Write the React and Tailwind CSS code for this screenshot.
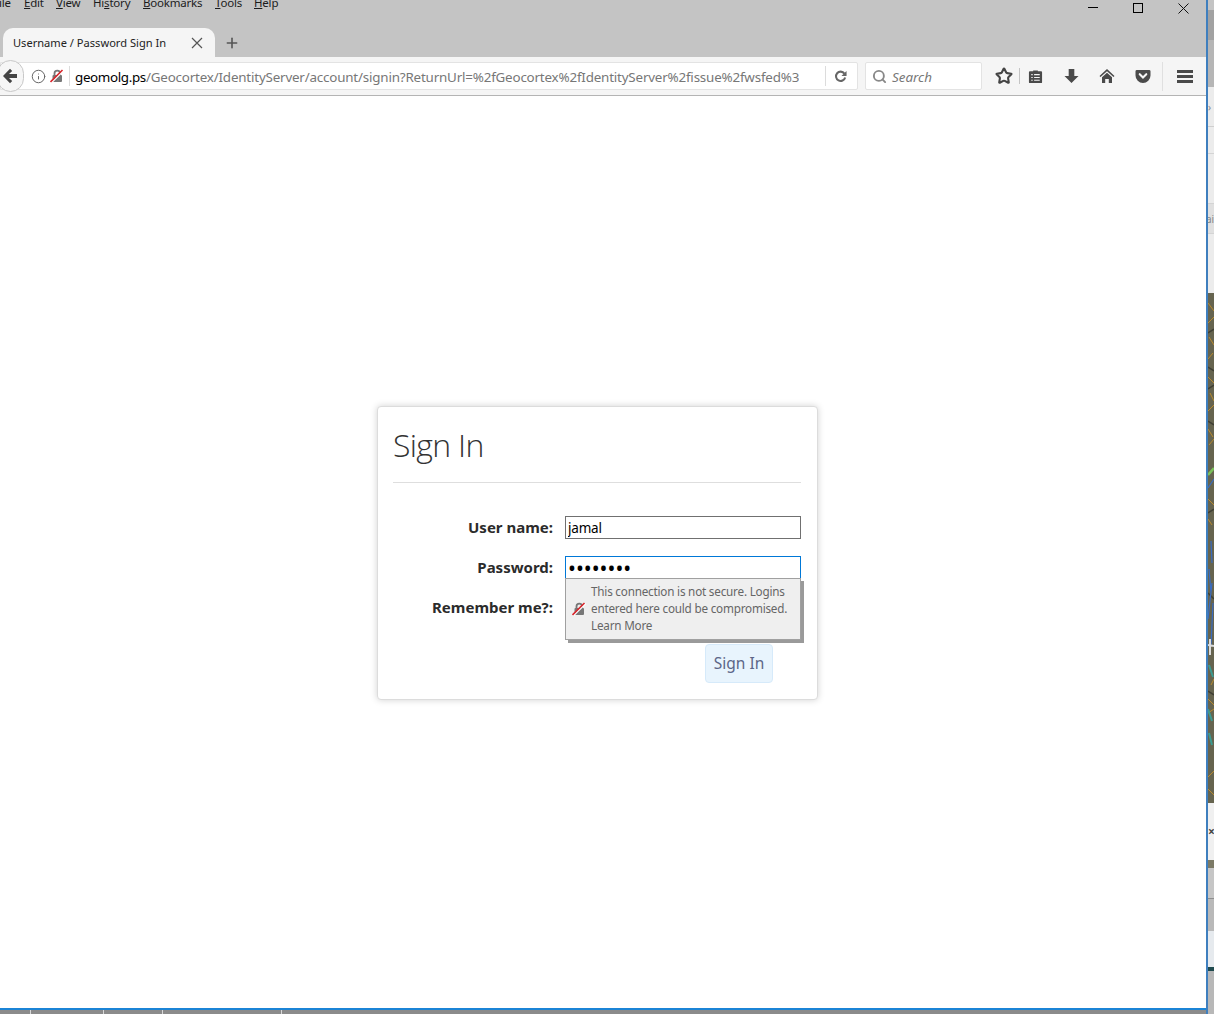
import { Plus, Search, Info, Star } from 'lucide-react';

// gray padlock with the red strike, used in the url bar and in the password popup
function InsecureLock({ className }) {
  return (
    <svg viewBox="0 0 14 14" className={className}>
      <path d="M4.500 6V4.400a2.800 2.800 0 0 1 5.600 0V6" fill="none" stroke="#777" strokeWidth="1.800" />
      <rect x="2.500" y="6" width="9.500" height="7" rx="1" fill="#777" />
      <path d="M1.600 13.600 13.600 1.600" stroke="#fff" strokeWidth="1.400" />
      <path d="M0.500 13 12.500 1" stroke="#d9262c" strokeWidth="1.600" />
    </svg>
  );
}

function BackArrow() {
  return (
    <svg viewBox="0 0 16 16" className="w-[16px] h-[16px] -ml-[2px]">
      <path d="M8 0.800 1 8l7 7.200 2.200-2.200L7 10h8V6H7l3.200-3z" fill="#444" />
    </svg>
  );
}

function ReloadIcon() {
  return (
    <svg viewBox="0 0 14 14" className="w-[13px] h-[13px]">
      <path d="M11.200 3.800A5 5 0 1 0 12 8" fill="none" stroke="#666" strokeWidth="2.200" />
      <path d="M13.500 1v5.500H8z" fill="#666" />
    </svg>
  );
}

function DownloadIcon() {
  return (
    <svg viewBox="0 0 16 16" className="w-[15px] h-[16px]">
      <path d="M5 0.500h6V8h4.500L8 15.500 0.500 8H5z" fill="#4a4a4a" />
    </svg>
  );
}

function ReadingList() {
  return (
    <svg viewBox="0 0 16 16" className="w-[15px] h-[15px]">
      <path d="M5.500 2.500V1.500h5v1H14a1 1 0 0 1 1 1V14a1 1 0 0 1-1 1H2a1 1 0 0 1-1-1V3.500a1 1 0 0 1 1-1z" fill="#4a4a4a" />
      <path d="M3.500 6h1.500M3.500 9h1.500M3.500 12h1.500M6.500 6h6M6.500 9h6M6.500 12h6" stroke="#f5f5f5" strokeWidth="1.200" />
    </svg>
  );
}

function HomeIcon() {
  return (
    <svg viewBox="0 0 16 16" className="w-[16px] h-[16px]">
      <path d="M8 1 0.500 8l1 1.100L8 3.200l6.500 5.900 1-1.100z" fill="#4a4a4a" />
      <path d="M3 9.300 8 4.800l5 4.500V15H9.800v-4H6.200v4H3z" fill="#4a4a4a" />
    </svg>
  );
}

function PocketIcon() {
  return (
    <svg viewBox="0 0 16 16" className="w-[16px] h-[15px]">
      <path d="M1.500 1h13A1.500 1.500 0 0 1 16 2.500V7a8 8 0 0 1-16 0V2.500A1.500 1.500 0 0 1 1.500 1z" fill="#4a4a4a" />
      <path d="M4.500 5.500 8 9l3.500-3.500" fill="none" stroke="#f5f5f5" strokeWidth="2.200" strokeLinecap="round" />
    </svg>
  );
}

function MenuItem({ label, rest, className }) {
  return (
    <span className={className}>
      <span className="underline">{label}</span>{rest}
    </span>
  );
}

function WindowBar() {
  return (
    <div className="h-[28px] flex items-start overflow-hidden text-[11.5px] leading-[14px] tracking-[-0.2px] text-[#1c1c1c]">
      <div className="flex -mt-[4px] -ml-[1px]">
        <span className="w-[25px]">ile</span>
        <MenuItem label="E" rest="dit" className="w-[32px]" />
        <MenuItem label="V" rest="iew" className="w-[37px]" />
        <span className="w-[50px]">Hi<span className="underline">s</span>tory</span>
        <MenuItem label="B" rest="ookmarks" className="w-[72px]" />
        <MenuItem label="T" rest="ools" className="w-[39px]" />
        <MenuItem label="H" rest="elp" />
      </div>
      <div className="ml-auto flex items-start mr-[17px] mt-[3px]">
        <div className="w-[10px] h-px bg-black mt-[4px]" />
        <div className="w-[10px] h-[10px] border border-black ml-[35px]" />
        <svg viewBox="0 0 11 11" className="w-[11px] h-[11px] ml-[35px]">
          <path d="M0.500 0.500 10.500 10.500M10.500 0.500 0.500 10.500" stroke="#111" strokeWidth="1" />
        </svg>
      </div>
    </div>
  );
}

function TabBar() {
  return (
    <div className="h-[29px] flex items-stretch">
      <div className="w-[212px] ml-[3px] bg-[#f5f5f5] rounded-t-[10px] flex items-center pl-[10px] pr-[12px] pt-[1px] text-[11.1px] text-[#222]">
        <span>Username / Password Sign In</span>
        <svg viewBox="0 0 12 12" className="ml-auto w-[12px] h-[12px]">
          <path d="M1 1 11 11M11 1 1 11" stroke="#555" strokeWidth="1.200" />
        </svg>
      </div>
      <div className="flex items-center ml-[9px]">
        <Plus className="w-[16px] h-[16px] text-[#555]" strokeWidth={2.4} />
      </div>
    </div>
  );
}

function Toolbar() {
  return (
    <div className="h-[39px] bg-[#f5f5f5] border-b border-[#b4b4b4] flex items-center">
      <div className="w-[858px] h-[28px] bg-white border border-[#e3e3e3] rounded-r-[2px] flex items-center">
        <div className="w-[27px] h-[32px] -ml-[4px] shrink-0 rounded-full bg-[#f6f6f6] border border-[#c8c8c8] flex items-center justify-center">
          <BackArrow />
        </div>
        <Info className="w-[15px] h-[15px] ml-[7px] text-[#666] shrink-0" strokeWidth={1.6} />
        <InsecureLock className="w-[14px] h-[14px] ml-[4px] shrink-0" />
        <div className="w-px h-[20px] bg-[#dcdcdc] ml-[5px] shrink-0" />
        <div className="ml-[5px] w-[724px] overflow-hidden whitespace-nowrap text-[13.4px] tracking-[-0.19px] text-[#777] shrink-0 pt-[2px]">
          <span className="text-black tracking-[-0.35px]">geomolg.ps</span>/Geocortex/IdentityServer/account/signin?ReturnUrl=%2fGeocortex%2fIdentityServer%2fissue%2fwsfed%3fwa
        </div>
        <div className="w-px h-[20px] bg-[#dcdcdc] ml-[26px] shrink-0" />
        <div className="ml-[8px] shrink-0"><ReloadIcon /></div>
      </div>
      <div className="w-[117px] h-[28px] ml-[7px] bg-white border border-[#e3e3e3] rounded-[2px] flex items-center pl-[6px]">
        <Search className="w-[15px] h-[15px] text-[#888]" strokeWidth={3} />
        <span className="ml-[5px] pt-[2px] italic text-[13.4px] text-[#777]">Search</span>
      </div>
      <Star className="w-[18px] h-[18px] ml-[13px] text-[#444]" strokeWidth={2.8} />
      <div className="w-px h-[16px] bg-[#c4c4c4] ml-[6px]" />
      <div className="ml-[8px]"><ReadingList /></div>
      <div className="ml-[21px]"><DownloadIcon /></div>
      <div className="ml-[20px]"><HomeIcon /></div>
      <div className="ml-[20px]"><PocketIcon /></div>
      <div className="w-px h-[29px] bg-[#e0e0e0] ml-[11px]" />
      <div className="ml-[14px] w-[16px] flex flex-col gap-[2px]">
        <div className="h-[3px] bg-[#4a4a4a]" />
        <div className="h-[3px] bg-[#4a4a4a]" />
        <div className="h-[3px] bg-[#4a4a4a]" />
      </div>
    </div>
  );
}

function SignInCard() {
  return (
    <div className="w-[441px] bg-white border border-[#dcdcdc] rounded-[4px] shadow-[0_0_7px_rgba(0,0,0,0.18)] pl-[15px] pr-[16px] pb-[16px]">
      <div className="h-[76px] border-b border-[#dedede] flex items-end pb-[15px]">
        <h1 className="text-[32px] leading-[44px] font-light text-[#333] font-['Open_Sans',sans-serif] tracking-[-0.7px]">Sign In</h1>
      </div>
      <form className="mt-[33px] relative">
        <div className="flex flex-col gap-[16px]">
          <div className="flex items-start h-[24px] gap-[12px]">
            <label className="w-[160px] text-right text-[15px] leading-[22px] font-bold text-[#2b2b2b]">User name:</label>
            <input type="text" defaultValue="jamal" className="w-[236px] h-[23px] border border-[#707070] px-[2px] text-[13.5px] tracking-[-0.2px] text-black outline-none" />
          </div>
          <div className="flex items-start h-[24px] gap-[12px]">
            <label className="w-[160px] text-right text-[15px] leading-[22px] font-bold text-[#2b2b2b]">Password:</label>
            <input type="password" defaultValue="password" className="w-[236px] h-[24px] border border-[#0078d7] px-[2px] text-[21px] leading-none text-black outline-none" />
          </div>
          <div className="flex items-start h-[24px] gap-[12px]">
            <label className="w-[160px] text-right text-[15px] leading-[22px] font-bold text-[#2b2b2b]">Remember me?:</label>
          </div>
        </div>
        <div className="pl-[312px] mt-[24px]">
          <button type="button" className="w-[68px] h-[39px] pt-[1px] bg-[#e8f4fd] border border-[#d6eafa] rounded-[4px] text-[15.5px] text-[#5c6688]">Sign In</button>
        </div>
        {/* insecure password popup, sits over the remember row */}
        <div className="absolute left-[172px] top-[62px] w-[236px] h-[62px] bg-[#efefef] border border-[#a0a0a0] shadow-[3px_3px_0_#9a9a9a] flex items-center pl-[6px] text-[11.7px] leading-[17px] text-[#666]">
          <InsecureLock className="w-[14px] h-[14px] shrink-0" />
          <div className="ml-[5px] -mt-[1px] tracking-[-0.2px] whitespace-nowrap">
            <div>This connection is not secure. Logins</div>
            <div>entered here could be compromised.</div>
            <div>Learn More</div>
          </div>
        </div>
      </form>
    </div>
  );
}

// the window behind the browser, only a sliver of it shows at the right edge
function BehindStrip() {
  return (
    <div className="w-[6px] flex flex-col overflow-hidden">
      <div className="h-[10px] bg-[#c4c4c4]" />
      <div className="h-[30px] bg-[#a2a2a2]" />
      <div className="h-[47px] bg-[#b6b6b6]" />
      <div className="h-[206px] bg-[#ececec] flex flex-col text-[10px] leading-none text-[#888]">
        <div className="h-[40px] border-b border-[#cfcfcf] flex items-center"><span>›</span></div>
        <div className="h-[27px] border-b border-[#d4d4d4]" />
        <div className="h-[50px] border-b border-[#d4d4d4]" />
        <div className="h-[30px] bg-[#e0e0e0] border-b border-[#d4d4d4] flex items-center"><span className="-ml-[2px]">ai</span></div>
      </div>
      <svg viewBox="0 0 6 510" preserveAspectRatio="none" className="w-[6px] h-[510px] block">
        <rect width="6" height="510" fill="#66644f" />
        <path d="M0 10 6 18M0 30 6 24M1 44 6 52M0 66 5 60M0 84 6 90M2 100 6 108M0 118 6 112M0 136 5 144M1 152 6 146M0 206 6 212M0 226 4 232M3 392 6 386M0 406 6 412M0 420 6 416M0 484 6 478M0 496 6 502" stroke="#b98a2e" strokeWidth="1" />
        <path d="M0 40 6 36M0 74 6 78M0 96 6 92M0 128 6 132M0 220 6 216M0 300 6 306M0 398 6 402" stroke="#3f3f34" strokeWidth="1.500" />
        <path d="M0 182 6 175" stroke="#7ac05a" strokeWidth="2.500" />
        <path d="M0 195 6 186M3 248 4 270M1 276 3 300M0 326 4 290M5 310 3 352" stroke="#3a6cc0" strokeWidth="1.200" />
        <path d="M1 372 5 384M0 416 4 428M1 440 4 452" stroke="#3c9a90" strokeWidth="2" />
        <path d="M0 352 6 353M2 346 2 362" stroke="#dcdcdc" strokeWidth="2" />
      </svg>
      <div className="h-[57px] bg-[#f0f0f0] flex items-center">
        <span className="text-[12px] leading-none font-bold text-[#444]">×</span>
      </div>
      <div className="h-[8px] bg-[#7c7a66]" />
      <div className="h-[31px] bg-[#c6c6c6] border-b border-[#8e8e8e]" />
      <div className="h-[32px] bg-[#b9b9b9]" />
      <div className="h-[36px] bg-[#e6eaee]" />
      <div className="h-[4px] bg-[#1f4a4e]" />
      <div className="flex-1 bg-[#b8b8b8]" />
    </div>
  );
}

export default function App() {
  return (
    <div className="w-[1214px] h-[1014px] overflow-hidden flex bg-white font-['Noto_Sans','Open_Sans',sans-serif]">
      <div className="w-[1206px] flex flex-col">
        <div className="h-[57px] bg-[#c4c4c4]">
          <WindowBar />
          <TabBar />
        </div>
        <Toolbar />
        <main className="flex-1 bg-white pt-[310px] pl-[377px]">
          <SignInCard />
        </main>
        <div className="h-[2px] bg-[#1b84d6]" />
        <div className="h-[4px] bg-[#8b8b8b] flex">
          <div className="w-[31px] border-r border-[#d8d8d8]" />
          <div className="w-[73px] border-r border-[#d8d8d8]" />
          <div className="w-[59px] border-r border-[#d8d8d8]" />
          <div className="w-[119px] border-r border-[#d8d8d8]" />
        </div>
      </div>
      <div className="w-[2px] bg-[#3f7fbe]" />
      <BehindStrip />
    </div>
  );
}
